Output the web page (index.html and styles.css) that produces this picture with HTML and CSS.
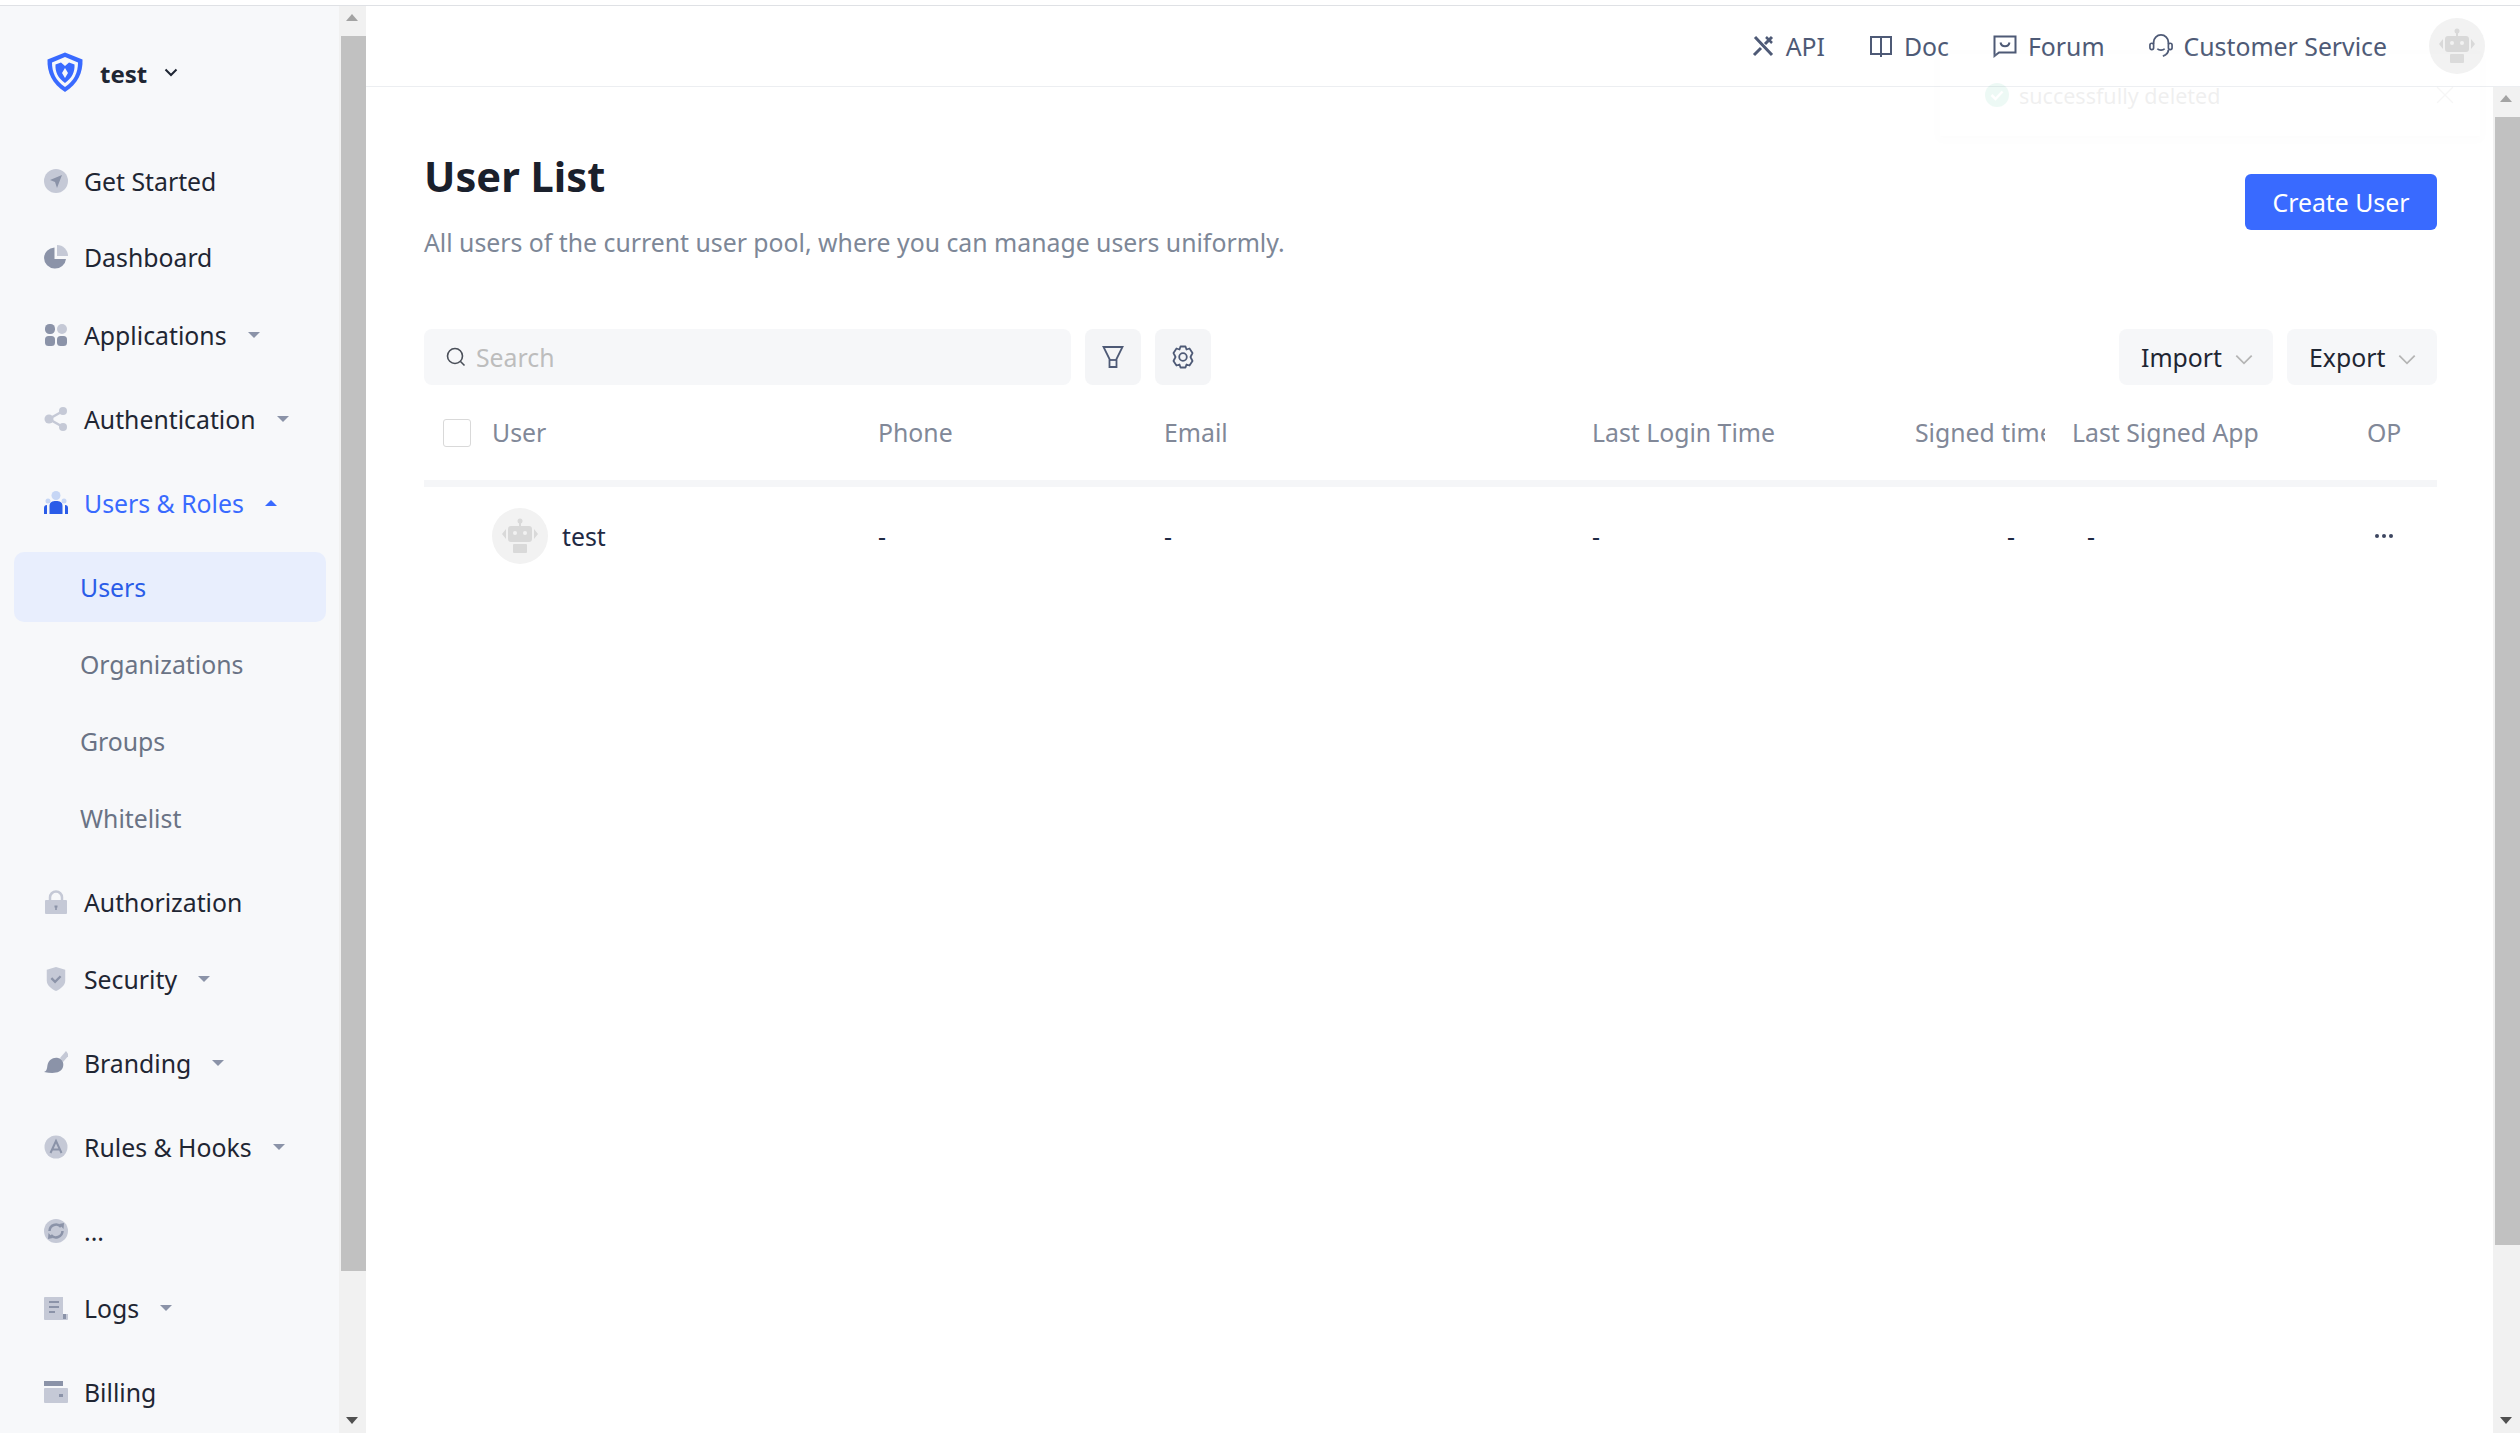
FILE: index.html
```html
<!DOCTYPE html>
<html lang="en">
<head>
<meta charset="utf-8">
<title>User List</title>
<link rel="stylesheet" href="styles.css">
</head>
<body>
<div class="topline"></div>
<div class="app">
  <aside class="sidebar">
    <div class="brand">
      <svg class="logo" viewBox="0 0 36 40"><path d="M18 0.5 35.5 7.5C36 20 31 32 18 40 5 32 0 20 0.5 7.5Z" fill="#396aff"/><path d="M18 5 31 10.5C31 20 27.500 28.500 18 35 8.500 28.500 5 20 5 10.500Z" fill="#f7f8fa"/><path d="M8.500 12.500 14 10.500 18 14 22 10.500 27.500 12.500C28 20 25 26 18 31 11 26 8 20 8.500 12.500Z" fill="#396aff"/><path d="M18 16 21 21 18 26 15 21Z" fill="#f7f8fa"/></svg>
      <span class="brand-name">test</span>
      <svg class="brand-caret" viewBox="0 0 14 9"><path d="M1.500 1.500 7 7 12.500 1.500" fill="none" stroke="#1f2633" stroke-width="2"/></svg>
    </div>
    <nav class="nav">
      <a class="item">
        <svg class="ico" viewBox="0 0 24 24"><circle cx="12" cy="12" r="12" fill="#c5c9d6"/><path d="M18 6 6 11 11 13 13 19Z" fill="#8b93a8"/></svg><span>Get Started</span>
      </a>
      <a class="item">
        <svg class="ico" viewBox="0 0 24 24"><path d="M10.500 2.500V14H22A11 10.500 0 1 1 10.500 2.500Z" fill="#8b93a8"/><path d="M13 0A11 11 0 0 1 24 11H13Z" fill="#c5c9d6"/></svg><span>Dashboard</span>
      </a>
      <a class="item after-leaf">
        <svg class="ico" viewBox="0 0 24 24"><rect x="1" y="1" width="10" height="10" rx="4.500" fill="#8b93a8"/><rect x="13" y="1" width="10" height="10" rx="5" fill="#c5c9d6"/><rect x="1" y="13" width="10" height="10" rx="3.500" fill="#8b93a8"/><rect x="13" y="13" width="10" height="10" rx="3.500" fill="#8b93a8"/></svg><span>Applications</span><i class="tri"></i>
      </a>
      <a class="item after-sub">
        <svg class="ico" viewBox="0 0 24 24"><path d="M19 4 5 12 19 20" fill="none" stroke="#c5c9d6" stroke-width="2.500"/><circle cx="19" cy="4" r="4" fill="#c5c9d6"/><circle cx="5" cy="12" r="4.500" fill="#c5c9d6"/><circle cx="19" cy="20" r="4" fill="#c5c9d6"/></svg><span>Authentication</span><i class="tri"></i>
      </a>
      <a class="item after-sub active-parent">
        <svg class="ico" viewBox="0 0 24 24"><circle cx="12" cy="4.500" r="4.500" fill="#c6d6f5"/><circle cx="4" cy="10" r="2.500" fill="#c6d6f5"/><circle cx="20" cy="10" r="2.500" fill="#c6d6f5"/><path d="M5.500 23V15C5.500 11 8.500 10 12 10S18.500 11 18.500 15V23Z" fill="#2a5ce8"/><path d="M0 23V17C0 15 1 14 3 14V23ZM24 23V17C24 15 23 14 21 14V23Z" fill="#2a5ce8"/></svg><span>Users &amp; Roles</span><i class="tri tri-up"></i>
      </a>
      <a class="subitem selected first-sub">Users</a>
      <a class="subitem">Organizations</a>
      <a class="subitem">Groups</a>
      <a class="subitem">Whitelist</a>
      <a class="item after-sub">
        <svg class="ico" viewBox="0 0 24 24"><path d="M6 11V7.500A6 6 0 0 1 18 7.500V11" fill="none" stroke="#c5c9d6" stroke-width="2.500"/><rect x="1" y="10" width="22" height="14" rx="1" fill="#c5c9d6"/><path d="M10.500 15.500H13.500V17.500H12.800V20H11.200V17.500H10.500Z" fill="#8b93a8"/></svg><span>Authorization</span>
      </a>
      <a class="item after-auth">
        <svg class="ico" viewBox="0 0 24 26"><path d="M2 3 12 0 22 3V15C22 20 17 24 12 26 7 24 2 20 2 15Z" fill="#c5c9d6"/><path d="M7 12 11 16 17 10" fill="none" stroke="#8b93a8" stroke-width="2.500"/></svg><span>Security</span><i class="tri"></i>
      </a>
      <a class="item after-sub">
        <svg class="ico" viewBox="0 0 24 24"><path d="M16 7 22 0 25 4 19 11Z" fill="#c5c9d6"/><path d="M0 21C3 20 3 17 3.500 14 4.500 9 9 6 14 7 19 8 20 13 19 16 17 22 10 23 0 21Z" fill="#8b93a8"/></svg><span>Branding</span><i class="tri"></i>
      </a>
      <a class="item after-sub">
        <svg class="ico" viewBox="0 0 24 24"><circle cx="12" cy="12" r="11.500" fill="#c5c9d6"/><path d="M6.500 18 12 6 17.500 18M8.500 14.500H15.500" fill="none" stroke="#8b93a8" stroke-width="2"/></svg><span>Rules &amp; Hooks</span><i class="tri"></i>
      </a>
      <a class="item after-sub">
        <svg class="ico" viewBox="0 0 24 24"><circle cx="12" cy="12" r="12" fill="#c5c9d6"/><path d="M5.500 12A6.500 6.500 0 0 1 17 8M18.500 12A6.500 6.500 0 0 1 7 16" fill="none" stroke="#8b93a8" stroke-width="2.500"/><path d="M15 5 20 4 19.500 10ZM9 19 4 20 4.500 14Z" fill="#8b93a8"/></svg><span>...</span>
      </a>
      <a class="item after-dots">
        <svg class="ico" viewBox="0 0 24 24"><path d="M1 1C0.500 1 0 1.500 0 2V23C0 23.500 .5 24 1 24H23C23.500 24 24 23.500 24 23V18H19V1Z" fill="#c5c9d6"/><path d="M5 6H15M5 11H15M5 16H11" stroke="#8b93a8" stroke-width="2"/><rect x="19" y="18" width="3" height="5" fill="#8b93a8"/></svg><span>Logs</span><i class="tri"></i>
      </a>
      <a class="item after-sub">
        <svg class="ico" viewBox="0 0 24 22"><rect x="0" y="0" width="19" height="5" fill="#8b93a8"/><rect x="0" y="7" width="24" height="15" rx="1" fill="#c5c9d6"/><rect x="15" y="13" width="4" height="3" fill="#8b93a8"/></svg><span>Billing</span>
      </a>
    </nav>
  </aside>
  <div class="scrollbar side-scrollbar">
    <i class="arrow arrow-up"></i>
    <div class="thumb side-thumb"></div>
    <i class="arrow arrow-down"></i>
  </div>
  <div class="main">
    <header class="topbar">
      <a class="toplink">
        <svg class="top-ico" viewBox="0 0 24 24"><path d="M4 3 21 21M10 14 3 21M21 3 14 10" fill="none" stroke="#4e5a76" stroke-width="3"/><path d="M15 3 21 9" fill="none" stroke="#4e5a76" stroke-width="2.500"/></svg><span>API</span>
      </a>
      <a class="toplink">
        <svg class="top-ico" viewBox="0 0 24 24"><path d="M12 3H2V20H12V23M12 3H22V20H12V3" fill="none" stroke="#4e5a76" stroke-width="2"/></svg><span>Doc</span>
      </a>
      <a class="toplink">
        <svg class="top-ico" viewBox="0 0 24 24"><path d="M1.500 2.500H22.500V18.500H6L1.500 22Z" fill="none" stroke="#4e5a76" stroke-width="2"/><path d="M7.500 8.500C8.500 13.500 15.500 13.500 16.500 8.500" fill="none" stroke="#4e5a76" stroke-width="2"/></svg><span>Forum</span>
      </a>
      <a class="toplink last-link">
        <svg class="top-ico" viewBox="0 0 26 26"><path d="M5 11V9A8 8 0 0 1 21 9V11M21 17C21 21 18 23 15 24" fill="none" stroke="#4e5a76" stroke-width="2"/><rect x="1" y="10" width="4" height="7" rx="2" fill="none" stroke="#4e5a76" stroke-width="1.800"/><rect x="21" y="10" width="4" height="7" rx="2" fill="none" stroke="#4e5a76" stroke-width="1.800"/><path d="M9 16C11 18 15 18 17 16" fill="none" stroke="#4e5a76" stroke-width="1.800"/></svg><span>Customer Service</span>
      </a>
      <div class="avatar">
        <svg class="robot" viewBox="0 0 36 36"><circle cx="18" cy="3" r="2.500" fill="#d9d9d9"/><rect x="17" y="4" width="2" height="5" fill="#d9d9d9"/><rect x="6" y="8" width="24" height="16" rx="3" fill="#d9d9d9"/><path d="M4 11V21L0 16ZM32 11V21L36 16Z" fill="#d9d9d9"/><rect x="11" y="26" width="14" height="9" rx="1" fill="#d9d9d9"/><circle cx="13" cy="15" r="2" fill="#f2f2f2"/><circle cx="23" cy="15" r="2" fill="#f2f2f2"/></svg>
      </div>
    </header>
    <div class="toast">
      <svg class="toast-ico" viewBox="0 0 24 24"><circle cx="12" cy="12" r="12" fill="#16b882"/><path d="M6.500 12 10.500 16 17.500 8.500" fill="none" stroke="#fff" stroke-width="2.500"/></svg>
      <span class="toast-text">successfully deleted</span>
      <svg class="toast-close" viewBox="0 0 16 16"><path d="M1 1 15 15M15 1 1 15" fill="none" stroke="#888" stroke-width="1.200"/></svg>
    </div>
    <div class="body-row">
      <main class="content">
        <div class="page-head">
          <div>
            <h1 class="title">User List</h1>
            <p class="desc">All users of the current user pool, where you can manage users uniformly.</p>
          </div>
          <button class="primary">Create User</button>
        </div>
        <div class="toolbar">
          <div class="search">
            <svg class="search-ico" viewBox="0 0 20 20"><circle cx="9" cy="9" r="7.500" fill="none" stroke="#4a4f59" stroke-width="1.600"/><path d="M14.500 14.500 18.500 18.500" stroke="#4a4f59" stroke-width="1.600"/></svg>
            <span class="placeholder">Search</span>
          </div>
          <button class="icon-btn"><svg class="tool-ico" viewBox="0 0 22 24"><path d="M1.500 2H20.500L14.500 14V22H7.500V14Z" fill="none" stroke="#4e5a76" stroke-width="1.800"/><path d="M7.500 15H14.500" stroke="#4e5a76" stroke-width="1.800"/></svg></button>
          <button class="icon-btn"><svg class="tool-ico" viewBox="0 0 24 24"><path d="M9.500 1.500H14.500L15.500 4.500 18.500 3.500 21.500 8 19.500 12 21.500 16 18.500 20.500 15.500 19.500 14.500 22.500H9.500L8.500 19.500 5.500 20.500 2.500 16 4.500 12 2.500 8 5.500 3.500 8.500 4.500Z" fill="none" stroke="#4e5a76" stroke-width="1.800" stroke-linejoin="round"/><circle cx="12" cy="12" r="3.800" fill="none" stroke="#4e5a76" stroke-width="1.800"/></svg></button>
          <div class="spacer"></div>
          <button class="menu-btn import-btn">Import<svg class="chev" viewBox="0 0 16 10"><path d="M1 1.500 8 8.500 15 1.500" fill="none" stroke="#b5b5b5" stroke-width="1.600"/></svg></button>
          <button class="menu-btn export-btn">Export<svg class="chev" viewBox="0 0 16 10"><path d="M1 1.500 8 8.500 15 1.500" fill="none" stroke="#b5b5b5" stroke-width="1.600"/></svg></button>
        </div>
        <div class="table">
          <div class="row head-row">
            <div class="cell"><span class="checkbox"></span></div>
            <div class="cell">User</div>
            <div class="cell">Phone</div>
            <div class="cell">Email</div>
            <div class="cell">Last Login Time</div>
            <div class="cell clip">Signed time</div>
            <div class="cell">Last Signed App</div>
            <div class="cell">OP</div>
          </div>
          <div class="row data-row">
            <div class="cell"></div>
            <div class="cell user-cell">
              <div class="avatar">
                <svg class="robot" viewBox="0 0 36 36"><circle cx="18" cy="3" r="2.500" fill="#d9d9d9"/><rect x="17" y="4" width="2" height="5" fill="#d9d9d9"/><rect x="6" y="8" width="24" height="16" rx="3" fill="#d9d9d9"/><path d="M4 11V21L0 16ZM32 11V21L36 16Z" fill="#d9d9d9"/><rect x="11" y="26" width="14" height="9" rx="1" fill="#d9d9d9"/><circle cx="13" cy="15" r="2" fill="#f2f2f2"/><circle cx="23" cy="15" r="2" fill="#f2f2f2"/></svg>
              </div>
              <span>test</span>
            </div>
            <div class="cell">-</div>
            <div class="cell">-</div>
            <div class="cell">-</div>
            <div class="cell right">-</div>
            <div class="cell indent">-</div>
            <div class="cell"><svg class="more" viewBox="0 0 20 4"><circle cx="3" cy="2" r="2" fill="#3d4660"/><circle cx="10" cy="2" r="2" fill="#3d4660"/><circle cx="17" cy="2" r="2" fill="#3d4660"/></svg></div>
          </div>
        </div>
      </main>
      <div class="scrollbar main-scrollbar">
        <i class="arrow arrow-up"></i>
        <div class="thumb main-thumb"></div>
        <i class="arrow arrow-down"></i>
      </div>
    </div>
  </div>
</div>
</body>
</html>
```
FILE: styles.css
```css
* { box-sizing: border-box; }
html, body { margin: 0; padding: 0; }
body {
  width: 2520px;
  height: 1433px;
  overflow: hidden;
  display: flex;
  flex-direction: column;
  background: #fff;
  color: #1f2633;
  font-family: "Noto Sans", "Open Sans", sans-serif;
  font-size: 24.8px;
}
.topline { height: 6px; flex: none; background: #fff; border-bottom: 1px solid #dfe1e5; }
.app { flex: 1; display: flex; min-height: 0; position: relative; }

.sidebar { width: 339px; flex: none; background: #f7f8fa; overflow: hidden; }
.brand { display: flex; align-items: center; height: 40px; margin: 46px 0 0 47px; }
.logo { width: 36px; height: 40px; flex: none; }
.brand-name { margin-left: 17px; position: relative; top: 1px; font-weight: 700; font-size: 24px; color: #1f2633; }
.brand-caret { width: 14px; height: 9px; margin-left: 17px; }
.nav { display: flex; flex-direction: column; margin-top: 48px; }
.item { display: flex; align-items: center; height: 70px; flex: none; margin-top: 6px; padding-left: 44px; color: #1f2633; }
.item.after-leaf { margin-top: 8px; }
.item.after-auth { margin-top: 7px; }
.item.after-sub { margin-top: 14px; }
.item.after-dots { margin-top: 7px; }
.ico { width: 24px; height: 24px; flex: none; margin-right: 16px; }
.tri { width: 0; height: 0; margin-left: 21px; border: 6px solid transparent; border-top: 6px solid #8b93a8; border-bottom: 0; }
.tri-up { border-top: 0; border-bottom: 6px solid #396aff; }
.active-parent { color: #396aff; }
.subitem { display: flex; align-items: center; height: 70px; flex: none; margin: 7px 13px 0 14px; padding-left: 66px; border-radius: 10px; color: #6a7385; }
.first-sub { margin-top: 14px; }
.selected { background: #e8eefd; color: #2a5ce8; }

.scrollbar { width: 27px; flex: none; display: flex; flex-direction: column; align-items: flex-end; background: #f1f1f1; }
.side-scrollbar { background: #f1f1f1; height: 100%; }
.thumb { width: 25px; flex: none; background: #c1c1c1; }
.side-thumb { height: 1235px; margin-top: 8px; }
.main-thumb { height: 1128px; margin-top: 8px; }
.arrow { display: block; width: 27px; flex: none; height: 22px; position: relative; }
.arrow::after { content: ""; position: absolute; left: 7px; top: 8px; width: 0; height: 0; border: 6.500px solid transparent; }
.arrow-up::after { border-top: 0; border-bottom: 7px solid #a3a3a3; }
.arrow-down { margin-top: auto; }
.arrow-down::after { top: 6px; border-bottom: 0; border-top: 7px solid #505050; }

.main { flex: 1; min-width: 0; display: flex; flex-direction: column; position: relative; }
.topbar { display: flex; align-items: center; justify-content: flex-end; height: 81px; flex: none; padding: 0 35px 0 0; border-bottom: 1px solid #eceef1; background: #fff; }
.toplink { display: flex; align-items: center; margin-right: 44px; color: #4e5a76; }
.toplink.last-link { margin-right: 42px; }
.top-ico { width: 24px; height: 24px; margin-right: 11px; flex: none; }
.avatar { width: 56px; height: 56px; border-radius: 50%; background: #f2f2f2; display: flex; align-items: center; justify-content: center; flex: none; }
.robot { width: 36px; height: 36px; }

.toast { position: absolute; left: 1574px; top: 48px; width: 540px; height: 82px; display: flex; align-items: center; padding: 0 0 0 45px; opacity: 0.07; box-shadow: 0 2px 6px rgba(0,0,0,0.12); background: #fff; }
.toast-ico { width: 24px; height: 24px; margin-right: 10px; }
.toast-text { font-size: 21.5px; color: #333; }
.toast-close { width: 18px; height: 18px; margin-left: auto; margin-right: 26px; }

.body-row { flex: 1; display: flex; min-height: 0; }
.content { flex: 1; min-width: 0; padding: 59px 56px 0 58px; }
.page-head { display: flex; justify-content: space-between; align-items: flex-start; }
.title { margin: 0; font-size: 41.6px; line-height: 60px; font-weight: 700; color: #1a202c; }
.desc { margin: 18px 0 0; font-size: 24.8px; line-height: 36px; color: #7d8797; }
.primary { margin-top: 28px; height: 56px; width: 192px; border: 0; border-radius: 6px; background: #396aff; color: #fff; font: inherit; }
.toolbar { display: flex; align-items: center; gap: 14px; margin-top: 69px; height: 56px; }
.search { width: 647px; height: 56px; display: flex; align-items: center; padding-left: 22px; background: #f6f7f9; border-radius: 8px; }
.search-ico { width: 20px; height: 20px; margin-right: 10px; }
.placeholder { color: #bdbdbd; }
.icon-btn { width: 56px; height: 56px; border: 0; border-radius: 8px; background: #f4f5f7; display: flex; align-items: center; justify-content: center; padding: 0; }
.tool-ico { width: 24px; height: 24px; }
.spacer { flex: 1; }
.menu-btn { height: 56px; padding: 0 0 0 22px; border: 0; border-radius: 8px; background: #f6f7f9; display: flex; align-items: center; font: inherit; color: #1f2633; }
.import-btn { width: 154px; }
.export-btn { width: 150px; }
.chev { width: 18px; height: 11px; margin-left: 13px; margin-top: 4px; }

.table { margin-top: 0; }
.row { display: grid; grid-template-columns: 68px 386px 286px 428px 323px 157px 295px 67px; align-items: center; }
.head-row { height: 102px; padding-bottom: 2px; border-bottom: 7px solid #f5f6f8; color: #818898; }
.data-row { height: 98px; color: #1f2a44; }
.clip { width: 130px; overflow: hidden; white-space: nowrap; }
.right { text-align: right; padding-right: 57px; }
.indent { padding-left: 15px; }
.checkbox { display: block; width: 28px; height: 28px; margin: 2px 0 0 19px; border: 1px solid #d9d9d9; border-radius: 3px; background: #fff; }
.user-cell { display: flex; align-items: center; gap: 14px; }
.more { width: 20px; height: 4px; display: block; margin-left: 7px; }
```
